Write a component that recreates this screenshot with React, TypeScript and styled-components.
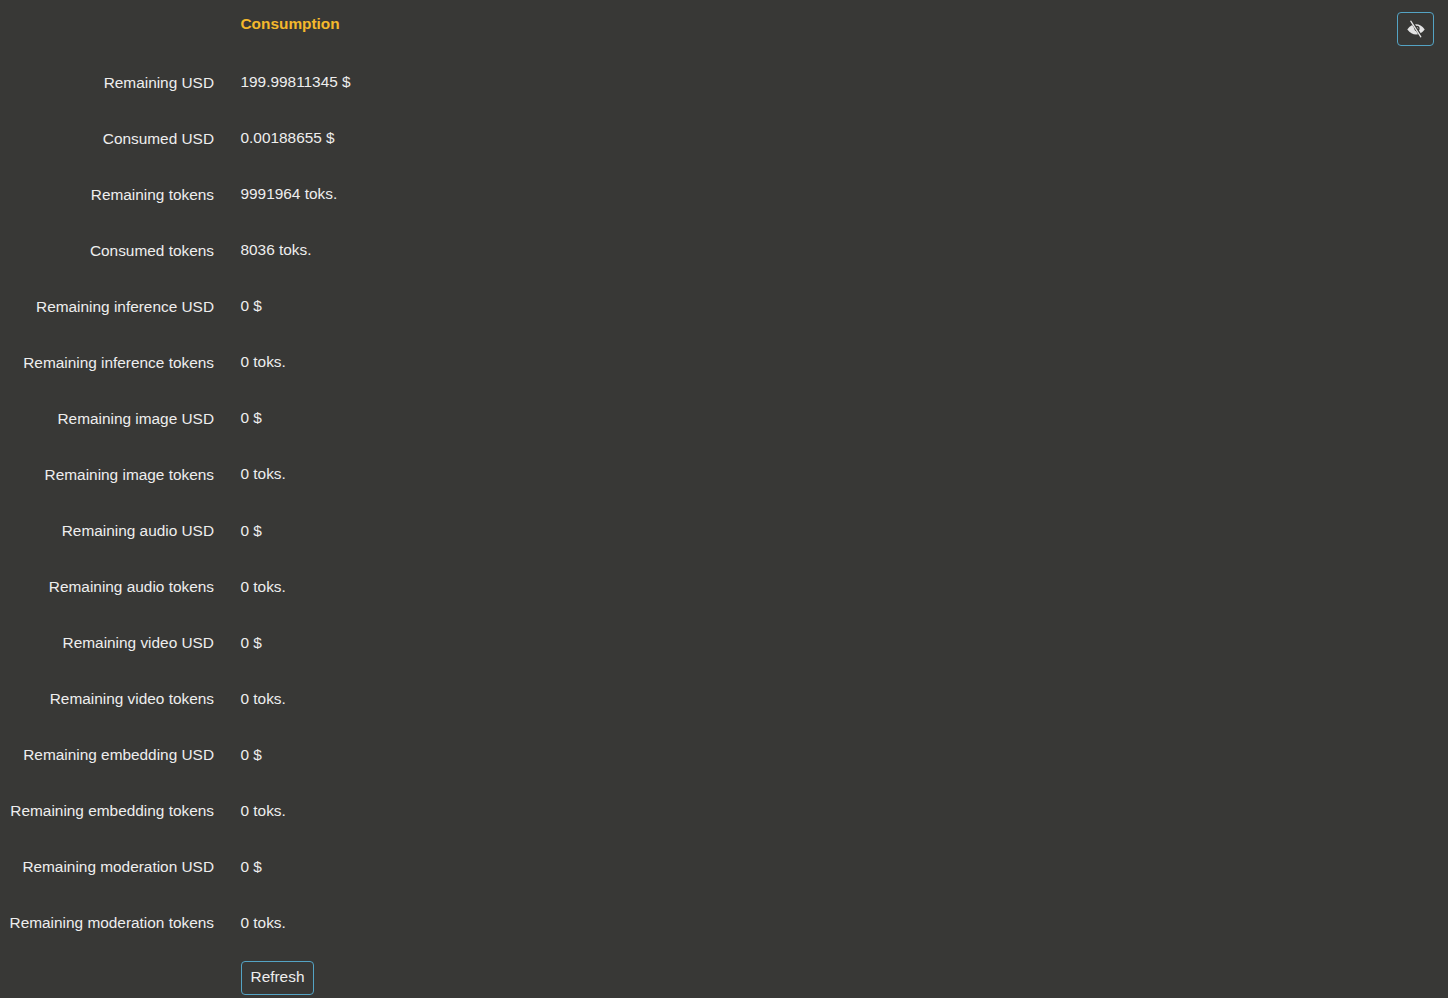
import React from "react";
import styled, { createGlobalStyle } from "styled-components";

const GlobalStyle = createGlobalStyle`
  html, body {
    margin: 0;
    padding: 0;
    background: #383836;
  }
`;

const Page = styled.div`
  position: relative;
  height: 998px;
  overflow: hidden;
  background: #383836;
  color: #eeeeee;
  font-family: "Liberation Sans", Arial, sans-serif;
  font-size: 15.4px;
`;

const Table = styled.div`
  display: grid;
  grid-template-columns: 214px 1fr;
  grid-template-rows: 54px;
  grid-auto-rows: 56.07px;
  column-gap: 26.5px;
  align-items: center;
`;

const Title = styled.div`
  grid-column: 2;
  align-self: start;
  line-height: 48px;
  font-weight: 700;
  color: #f4b82c;
`;

const Label = styled.div`
  margin-top: 1px;
  text-align: right;
  white-space: nowrap;
`;

const Value = styled.div`
  white-space: nowrap;
`;

const RefreshButton = styled.button`
  grid-column: 2;
  justify-self: start;
  align-self: start;
  margin-top: 10px;
  width: 73px;
  height: 34px;
  padding: 0 0 2px 1px;
  background: transparent;
  border: 1px solid #54a3c4;
  border-radius: 4px;
  color: #eeeeee;
  font: inherit;
`;

const HideButton = styled.button`
  position: absolute;
  top: 12px;
  right: 14px;
  width: 37px;
  height: 34px;
  display: flex;
  align-items: center;
  justify-content: center;
  padding: 0;
  background: transparent;
  border: 1px solid #54a3c4;
  border-radius: 4px;
  color: #e4e4e4;
`;

const EyeOffIcon = () => (
  <svg width="18" height="18" viewBox="0 0 18 18">
    <path
      d="M0.3 9.4 C3 5.8 5.8 4.2 9 4.2 C12.2 4.2 15 5.8 17.7 9.4 C15 13 12.2 14.4 9 14.4 C5.8 14.4 3 13 0.3 9.4 Z"
      fill="currentColor"
    />
    <circle cx="10" cy="8.4" r="2.6" fill="#383836" />
    <circle cx="10" cy="8.4" r="1.2" fill="currentColor" />
    <path d="M4.4 1 L14.4 17" stroke="#383836" strokeWidth="2.8" />
    <path d="M3.8 1.2 L13.8 16.8" stroke="currentColor" strokeWidth="1.3" strokeLinecap="round" />
  </svg>
);

const rows: [string, string][] = [
  ["Remaining USD", "199.99811345 $"],
  ["Consumed USD", "0.00188655 $"],
  ["Remaining tokens", "9991964 toks."],
  ["Consumed tokens", "8036 toks."],
  ["Remaining inference USD", "0 $"],
  ["Remaining inference tokens", "0 toks."],
  ["Remaining image USD", "0 $"],
  ["Remaining image tokens", "0 toks."],
  ["Remaining audio USD", "0 $"],
  ["Remaining audio tokens", "0 toks."],
  ["Remaining video USD", "0 $"],
  ["Remaining video tokens", "0 toks."],
  ["Remaining embedding USD", "0 $"],
  ["Remaining embedding tokens", "0 toks."],
  ["Remaining moderation USD", "0 $"],
  ["Remaining moderation tokens", "0 toks."],
];

const App = () => {
  return (
    <Page>
      <GlobalStyle />
      <HideButton>
        <EyeOffIcon />
      </HideButton>
      <Table>
        <Title>Consumption</Title>
        {rows.map(([label, value]) => (
          <React.Fragment key={label}>
            <Label>{label}</Label>
            <Value>{value}</Value>
          </React.Fragment>
        ))}
        <RefreshButton>Refresh</RefreshButton>
      </Table>
    </Page>
  );
};

export default App;
